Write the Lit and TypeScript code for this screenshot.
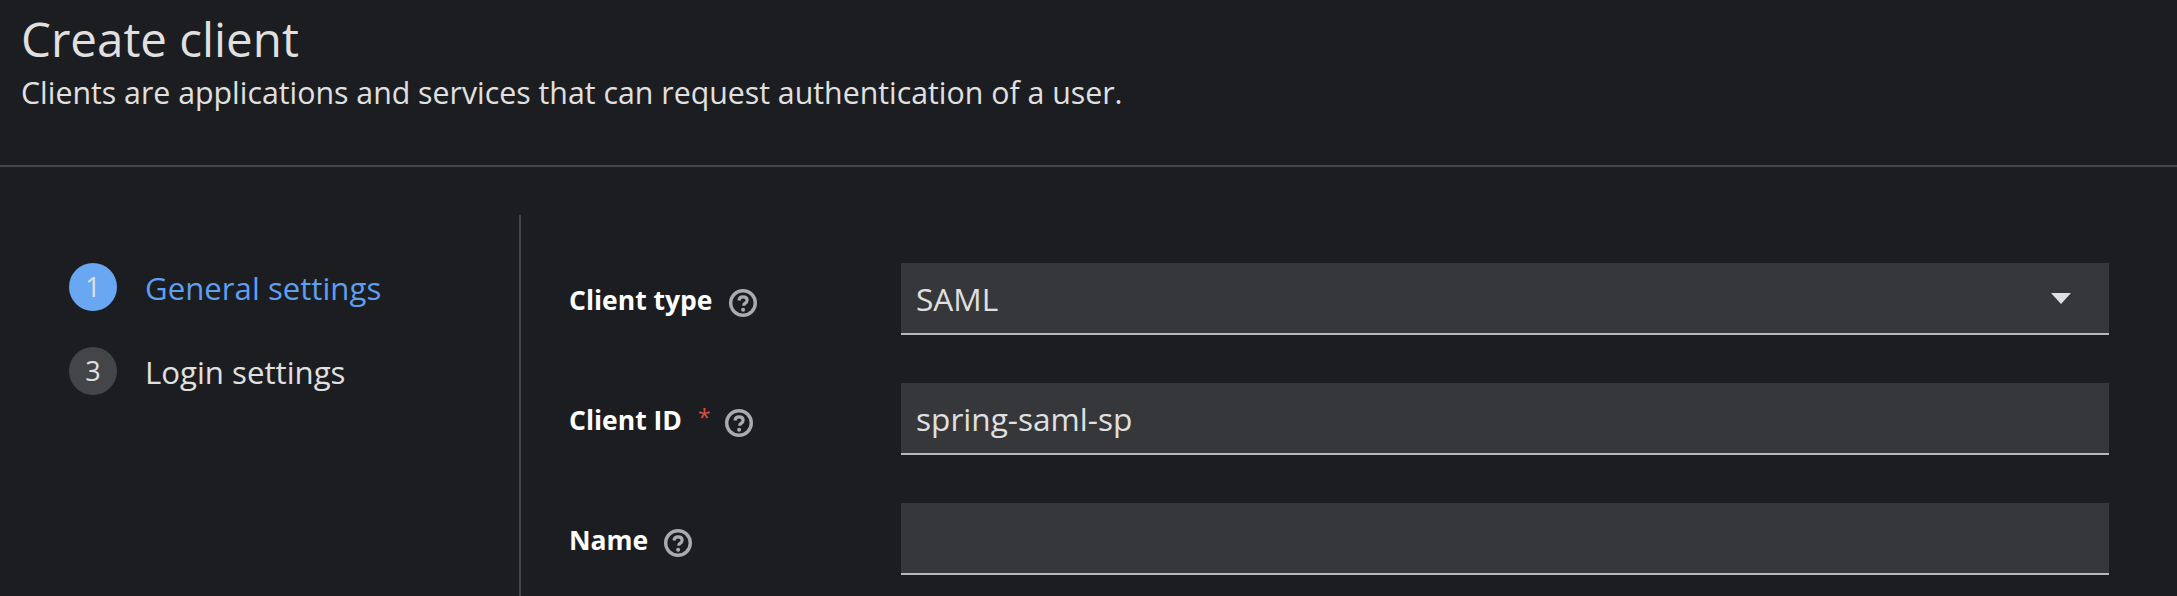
import { LitElement, html, css } from "lit";
import { customElement } from "lit/decorators.js";

const helpIcon = html`<svg class="help" viewBox="0 0 28 28" width="28" height="28" aria-hidden="true">
  <circle cx="14" cy="14" r="12.300" fill="none" stroke="#aaabac" stroke-width="3.400"></circle>
  <path d="M10 11.500c.2-2.300 1.800-3.600 4.100-3.600 2.400 0 4 1.300 4 3.300 0 1.700-1 2.400-2.100 3.200-1 .7-1.300 1.200-1.300 2.400" fill="none" stroke="#aaabac" stroke-width="3.200"></path>
  <circle cx="14.100" cy="20.800" r="2" fill="#aaabac"></circle>
</svg>`;

@customElement("app-root")
export class AppRoot extends LitElement {
  static styles = css`
    :host {
      display: block;
      height: 596px;
      overflow: hidden;
      background: #1b1d21;
      color: #e0e0e0;
      font-family: "Open Sans", "Lato", sans-serif;
    }

    .head {
      height: 167px;
      box-sizing: border-box;
      padding: 12px 21px 0;
      border-bottom: 2px solid #444548;
    }

    h1 {
      margin: 0;
      font-size: 47.500px;
      line-height: 54px;
      font-weight: 400;
    }

    .sub {
      margin: 9px 0 0;
      font-size: 30.300px;
      line-height: 36px;
    }

    .body {
      display: flex;
      padding-top: 48px;
    }

    .steps {
      width: 521px;
      height: 400px;
      box-sizing: border-box;
      flex: none;
      padding: 47px 0 0 69px;
      border-right: 2px solid #444548;
      display: flex;
      flex-direction: column;
      gap: 34px;
    }

    .step {
      display: flex;
      align-items: center;
      gap: 28px;
      font-size: 31.200px;
      line-height: 48px;
    }

    .step-text {
      padding-top: 2px;
    }

    .num {
      width: 48px;
      height: 48px;
      border-radius: 50%;
      background: #444548;
      display: flex;
      align-items: center;
      justify-content: center;
      font-size: 27px;
    }

    .step.active {
      color: #5e9ff0;
    }

    .step.active .num {
      background: #6aa7f3;
      color: #e0e0e0;
    }

    .form {
      flex: 1;
      padding: 48px 68px 0 48px;
      display: flex;
      flex-direction: column;
      gap: 48px;
    }

    .row {
      display: flex;
      align-items: center;
    }

    .label {
      width: 332px;
      flex: none;
      display: flex;
      align-items: center;
      padding-top: 2px;
      box-sizing: border-box;
      font-size: 26.500px;
      font-weight: 700;
      color: #fff;
    }

    .star {
      color: #d9503f;
      font-size: 23px;
      font-weight: 400;
      margin-left: 16px;
      margin-bottom: 6px;
    }

    .help {
      margin-left: 16px;
      margin-top: 5px;
    }

    .star + .help {
      margin-left: 14px;
    }

    .field {
      flex: 1;
      height: 72px;
      box-sizing: border-box;
      background: #36373b;
      border-bottom: 2px solid #b8b8b8;
      padding: 0 15px;
      display: flex;
      align-items: center;
      justify-content: space-between;
      font-size: 31.600px;
      color: #e0e0e0;
    }

    .caret {
      width: 0;
      height: 0;
      margin-right: 23px;
      border-left: 10px solid transparent;
      border-right: 10px solid transparent;
      border-top: 11px solid #e0e0e0;
    }
  `;

  render() {
    return html`
      <div class="head">
        <h1>Create client</h1>
        <p class="sub">Clients are applications and services that can request authentication of a user.</p>
      </div>
      <div class="body">
        <div class="steps">
          <div class="step active"><span class="num">1</span><span class="step-text">General settings</span></div>
          <div class="step"><span class="num">3</span><span class="step-text">Login settings</span></div>
        </div>
        <div class="form">
          <div class="row">
            <div class="label">Client type${helpIcon}</div>
            <div class="field">SAML<span class="caret"></span></div>
          </div>
          <div class="row">
            <div class="label">Client ID<span class="star">*</span>${helpIcon}</div>
            <div class="field">spring-saml-sp</div>
          </div>
          <div class="row">
            <div class="label">Name${helpIcon}</div>
            <div class="field"></div>
          </div>
        </div>
      </div>
    `;
  }
}
